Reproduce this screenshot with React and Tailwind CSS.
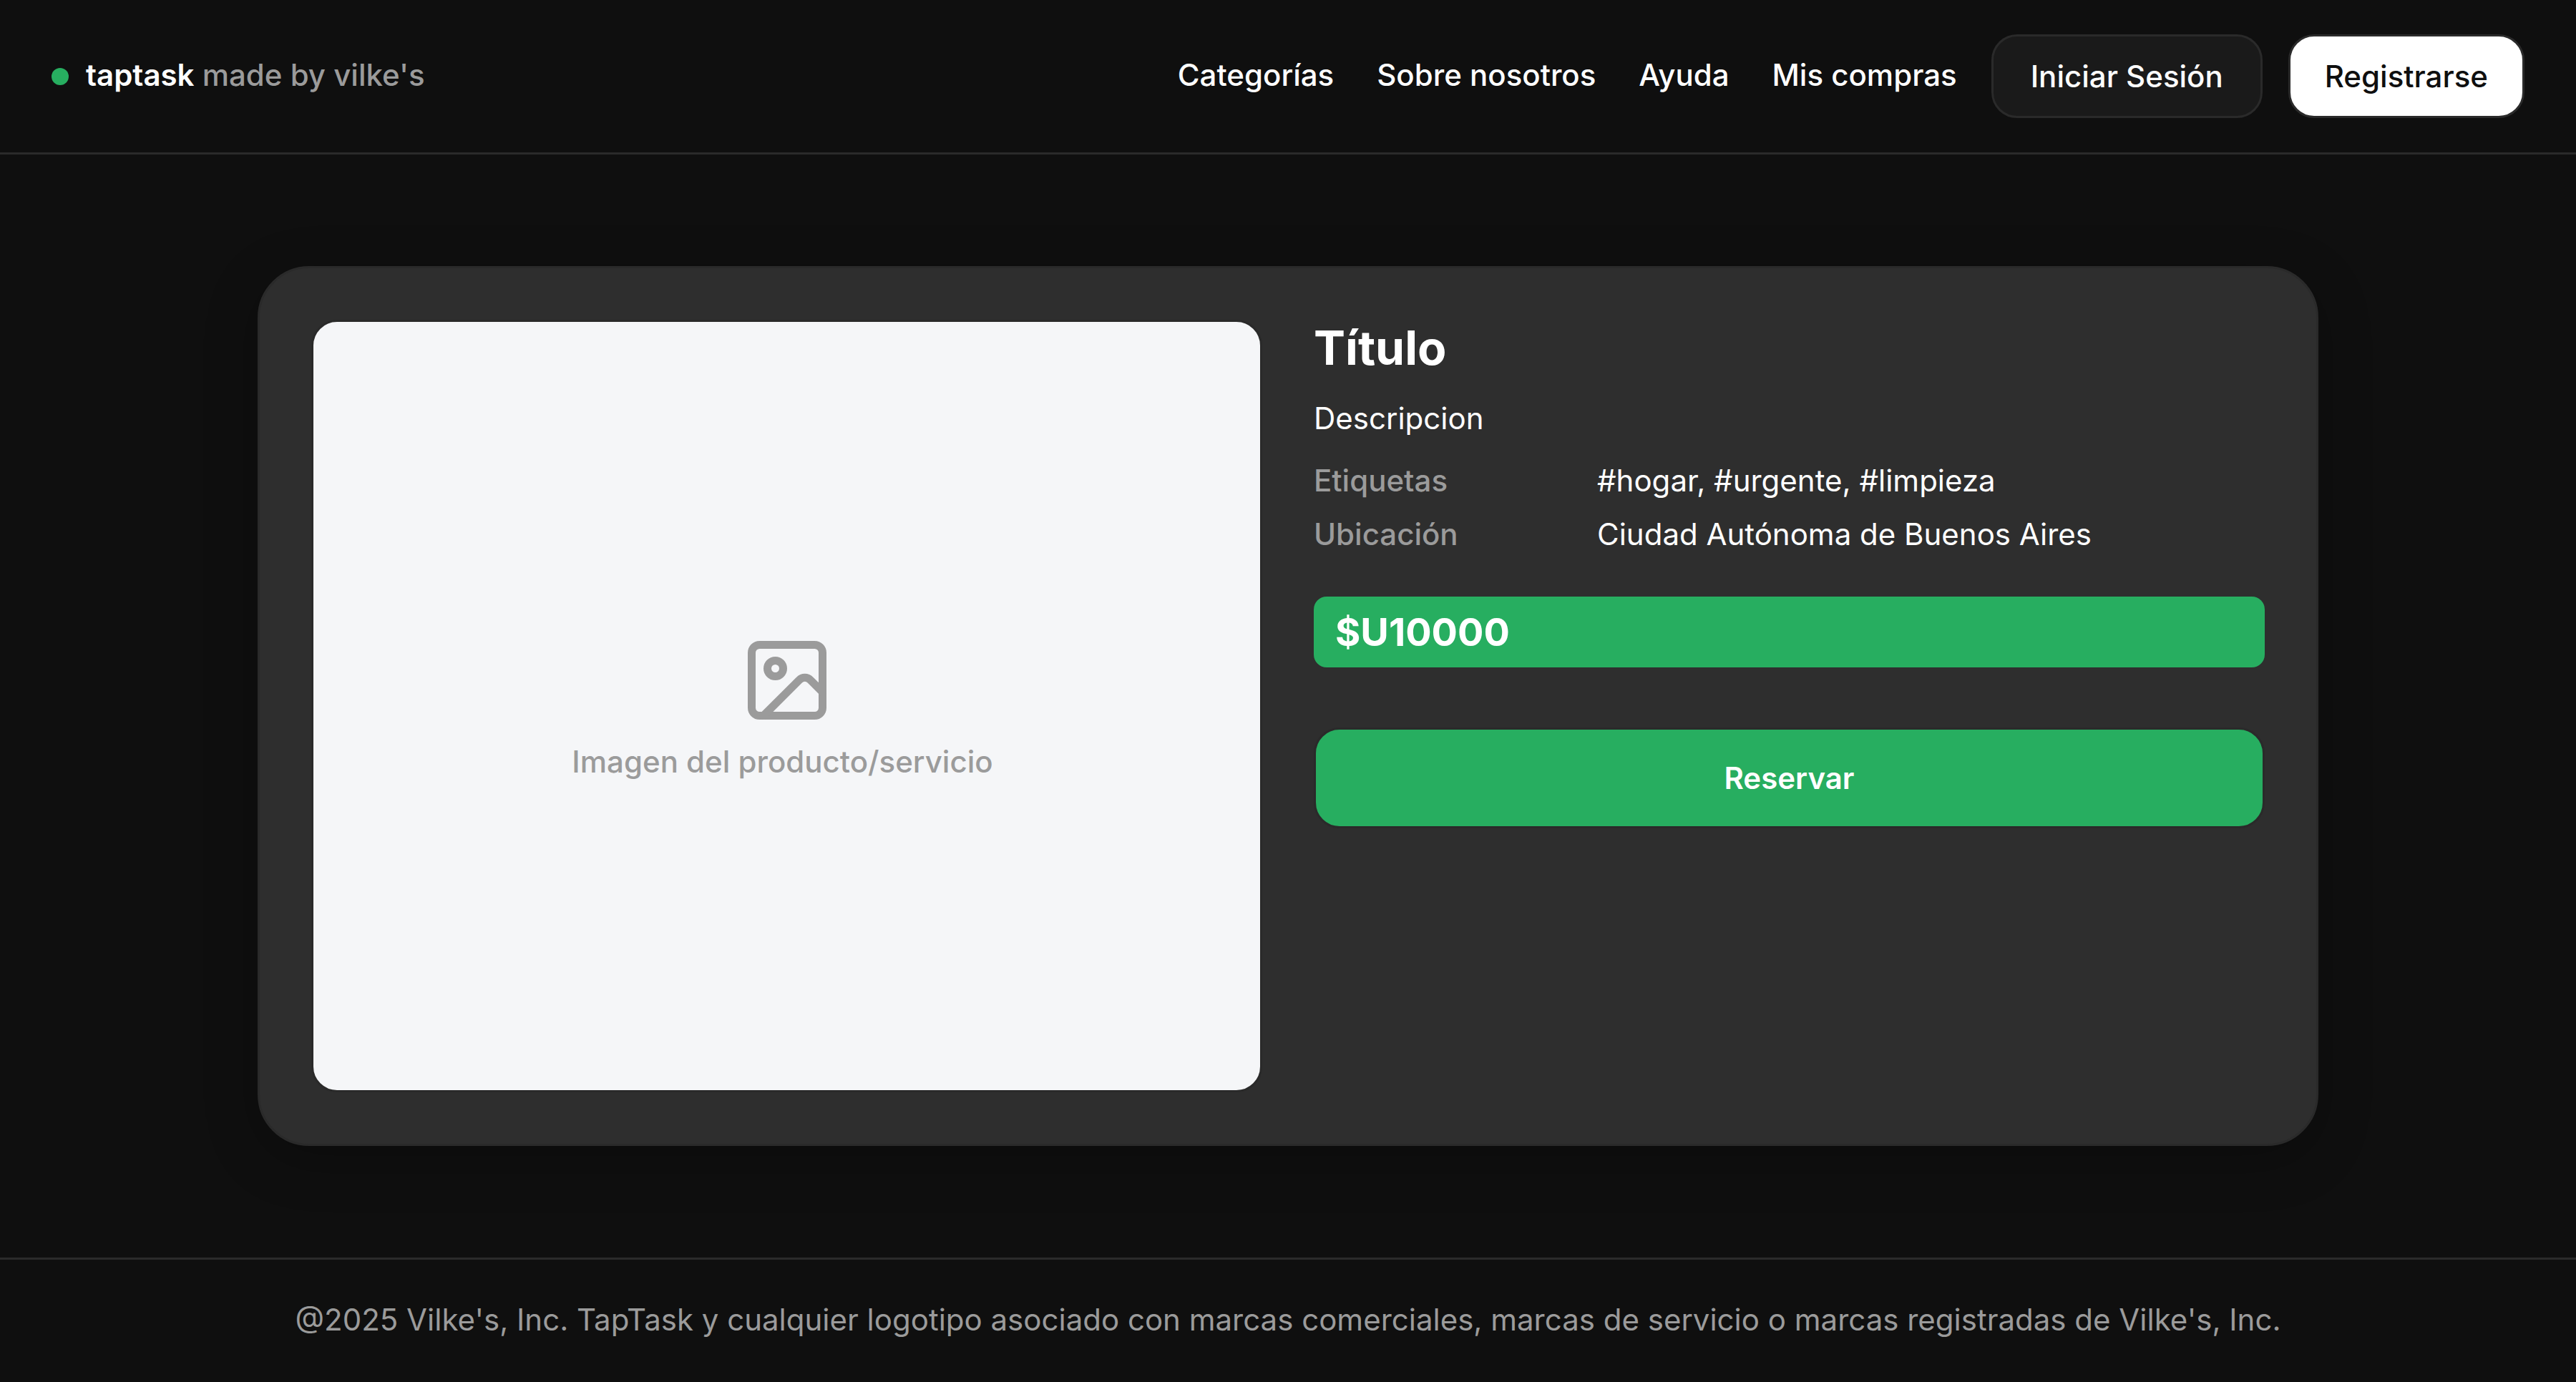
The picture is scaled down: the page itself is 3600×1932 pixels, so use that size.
import { Image } from "lucide-react";

const links = ["Categorías", "Sobre nosotros", "Ayuda", "Mis compras"];

const details = [
  { label: "Etiquetas", value: "#hogar, #urgente, #limpieza" },
  { label: "Ubicación", value: "Ciudad Autónoma de Buenos Aires" },
];

function Header() {
  return (
    <header className="flex items-center justify-between border-b-3 border-[#2a2a2a] px-18 py-12">
      <a href="#" className="flex items-center gap-6">
        <span className="size-6 rounded-full bg-[#27ae60]" />
        <span className="pb-1 font-medium text-[#9b9b9b]">
          <strong className="font-semibold text-white">taptask</strong> made by vilke's
        </span>
      </a>
      <div className="flex items-center gap-12">
        <nav className="flex gap-15 pb-1 font-medium">
          {links.map((link) => (
            <a key={link} href="#">
              {link}
            </a>
          ))}
        </nav>
        <div className="flex gap-9">
          <button className="rounded-[36px] border-3 border-[#2a2a2a] bg-[#1a1a1a] px-[52px] py-[30px] font-medium">
            Iniciar Sesión
          </button>
          <button className="rounded-[36px] border-3 border-[#2a2a2a] bg-white px-12 py-[30px] font-medium text-[#0f0f0f]">
            Registrarse
          </button>
        </div>
      </div>
    </header>
  );
}

function ProductCard() {
  return (
    <article className="mx-auto grid w-full max-w-[2880px] grid-cols-2 gap-18 rounded-[72px] border-3 border-[#2a2a2a] bg-[#2e2e2e] p-18 shadow-[0_18px_72px_rgba(0,0,0,0.25)]">
      <div className="flex h-[1080px] flex-col items-center justify-center gap-[22px] rounded-[36px] border-3 border-[#2a2a2a] bg-[#f5f6f8] text-[#9b9b9b]">
        <Image size={132} strokeWidth={2} aria-hidden="true" />
        <p className="pr-3 font-medium">Imagen del producto/servicio</p>
      </div>
      <div>
        <h1 className="text-[66px] leading-[78px] font-bold">Título</h1>
        <p className="mt-[34px]">Descripcion</p>
        <dl className="mt-9 grid grid-cols-[360px_1fr] gap-x-9 gap-y-6">
          {details.map(({ label, value }) => (
            <div key={label} className="contents">
              <dt className="font-medium text-[#9b9b9b]">{label}</dt>
              <dd>{value}</dd>
            </div>
          ))}
        </dl>
        <p className="mt-[62px] rounded-[18px] bg-[#27ae60] px-[30px] py-[18px] text-[54px] leading-[63px] font-bold">
          $U10000
        </p>
        <button className="mt-21 w-full rounded-[36px] border-3 border-[#2a2a2a] bg-[#27ae60] py-[42px] font-semibold">
          Reservar
        </button>
      </div>
    </article>
  );
}

export default function App() {
  return (
    <div className="flex min-h-screen flex-col bg-[#0f0f0f] font-['Inter',sans-serif] text-[42px] leading-[51px] text-white">
      <Header />
      <main className="flex-1 px-18 py-39">
        <ProductCard />
      </main>
      <footer className="border-t-3 border-[#2a2a2a] px-18 pt-[58px] pb-[62px] text-center text-[#9b9b9b]">
        @2025 Vilke's, Inc. TapTask y cualquier logotipo asociado con marcas comerciales, marcas de servicio o marcas
        registradas de Vilke's, Inc.
      </footer>
    </div>
  );
}
